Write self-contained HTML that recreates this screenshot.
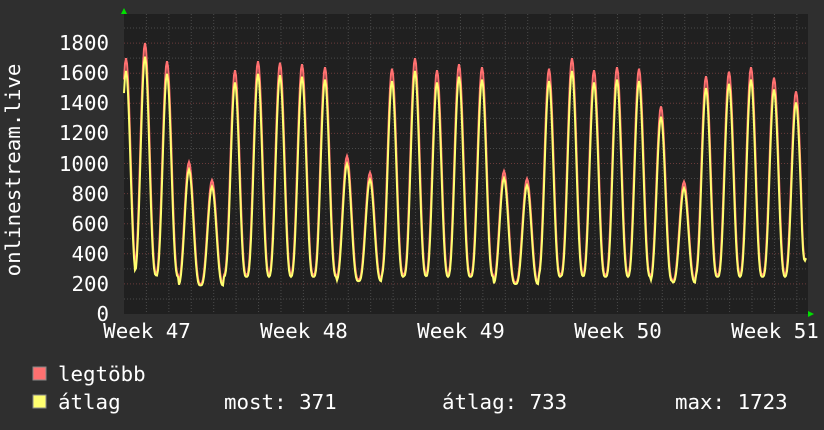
<!DOCTYPE html>
<html><head><meta charset="utf-8"><style>
html,body{margin:0;padding:0;background:#2f2f2f;width:824px;height:430px;overflow:hidden}
svg text{font-family:"DejaVu Sans Mono","Liberation Mono",monospace;fill:#fff}
</style></head><body>
<svg id="g" width="824" height="430" xmlns="http://www.w3.org/2000/svg">
<rect x="0" y="0" width="824" height="430" fill="#2f2f2f"/>
<rect x="124" y="14" width="684" height="300" fill="#202020"/>
<g id="grid"></g>
<polyline id="mx" fill="none" stroke="#ff7070" stroke-width="2"/>
<polyline id="av" fill="none" stroke="#ffff70" stroke-width="2"/>
<polygon points="121,14 127,14 124,8" fill="#00e000"/>
<polygon points="808,311 808,317 814,314" fill="#00e000"/>
<g font-size="20.8" text-anchor="end">
<text x="109" y="50">1800</text><text x="109" y="80">1600</text><text x="109" y="110">1400</text>
<text x="109" y="140">1200</text><text x="109" y="171">1000</text><text x="109" y="201">800</text>
<text x="109" y="231">600</text><text x="109" y="261">400</text><text x="109" y="291">200</text>
<text x="109" y="321">0</text>
</g>
<g font-size="20.8" text-anchor="middle">
<text x="147" y="338">Week 47</text><text x="304" y="338">Week 48</text><text x="461" y="338">Week 49</text>
<text x="618" y="338">Week 50</text><text x="775" y="338">Week 51</text>
</g>
<text font-size="20.8" transform="translate(20,170) rotate(-90)" text-anchor="middle">onlinestream.live</text>
<rect x="33" y="367" width="13" height="13" fill="#ff7070" stroke="#888" stroke-width="1"/>
<rect x="33" y="395" width="13" height="13" fill="#ffff70" stroke="#888" stroke-width="1"/>
<g font-size="20.8">
<text x="58" y="381">legtöbb</text>
<text x="58" y="409">átlag</text>
<text x="224" y="409">most: 371</text>
<text x="442" y="409">átlag: 733</text>
<text x="675" y="409">max: 1723</text>
</g>
</svg>
<script>
var ns="http://www.w3.org/2000/svg",g=document.getElementById("grid");
function ln(x1,y1,x2,y2,c){var l=document.createElementNS(ns,"line");l.setAttribute("x1",x1);l.setAttribute("y1",y1);l.setAttribute("x2",x2);l.setAttribute("y2",y2);l.setAttribute("stroke",c);l.setAttribute("stroke-width",1);l.setAttribute("stroke-dasharray","1,2");g.appendChild(l);}
for(var v=100;v<=1950;v+=100){var y=314-v*0.1505;ln(124,y,808,y,v%200==0?"#6a3a3a":"#4a4a4a");}
for(var x=124+22.4;x<808;x+=22.43){var r=((x-224.5)%157+157)%157;var red=r<3||r>154;ln(x,14,x,314,red?"#7a3535":"#4a4a4a");}
var peaks=[[126,1700],[145,1800],[167,1680],[189,1010],[212,890],[235,1620],[258,1680],[280,1670],[302,1660],[325,1640],[347,1050],[370,940],[392,1630],[415,1700],[437,1620],[459,1660],[482,1640],[504,950],[527,900],[549,1630],[572,1700],[594,1620],[617,1640],[639,1630],[661,1380],[684,880],[706,1580],[729,1610],[751,1640],[774,1570],[796,1480]];
var mins=[260,270,260,200,200,260,260,260,260,260,230,230,260,265,260,260,260,210,210,260,265,260,260,260,230,220,260,260,260,260,260];
var pm="",pa="";
for(var x=124;x<=806;x++){
 var i=0;while(i<peaks.length-1&&Math.abs(peaks[i+1][0]-x)<Math.abs(peaks[i][0]-x))i++;
 var d=(x-peaks[i][0])/22.4;if(d<-0.5)d=-0.5;if(d>0.5)d=0.5;
 var f=Math.pow(0.5+0.5*Math.cos(2*Math.PI*d),1.3);
 var pk=peaks[i][1],mn=mins[i];
 var m=mn+(pk-mn)*f;
 var a=mn*0.95+(pk*0.95-mn*0.95)*Math.pow(f,1.1);
 if(x>=802){var t=(x-801)/5;m=m*(1-t)+371*t;a=a*(1-t)+371*t;}
 pm+=x+","+(314-m*0.1505).toFixed(1)+" ";pa+=x+","+(314-a*0.1505).toFixed(1)+" ";
}
document.getElementById("mx").setAttribute("points",pm);
document.getElementById("av").setAttribute("points",pa);
</script>
</body></html>
